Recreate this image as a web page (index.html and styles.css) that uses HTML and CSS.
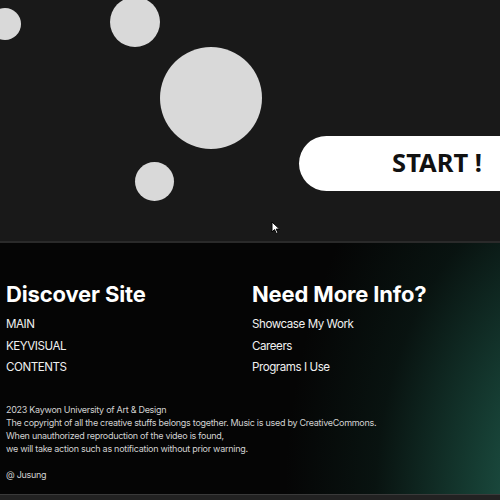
FILE: index.html
```html
<!DOCTYPE html>
<html>
<head>
<meta charset="utf-8">
<link rel="stylesheet" href="styles.css">
</head>
<body>
<section class="hero">
  <span class="dot dot-a"></span>
  <span class="dot dot-b"></span>
  <span class="dot dot-c"></span>
  <span class="dot dot-d"></span>
  <button class="start">START !</button>
  <svg class="cursor" width="10" height="14" viewBox="0 0 10 14"><path d="M1 1 L1 11 L3.5 8.6 L5.4 12.6 L7 11.9 L5.2 8.1 L8.6 8.1 Z" fill="#fff" stroke="#000" stroke-width="1"/></svg>
</section>
<footer class="footer">
  <div class="cols">
    <div class="col">
      <h2>Discover Site</h2>
      <ul>
        <li>MAIN</li>
        <li>KEYVISUAL</li>
        <li>CONTENTS</li>
      </ul>
    </div>
    <div class="col">
      <h2>Need More Info?</h2>
      <ul>
        <li>Showcase My Work</li>
        <li>Careers</li>
        <li>Programs I Use</li>
      </ul>
    </div>
  </div>
  <p class="copy">2023 Kaywon University of Art &amp; Design<br>The copyright of all the creative stuffs belongs together. Music is used by CreativeCommons.<br>When unauthorized reproduction of the video is found,<br>we will take action such as notification without prior warning.</p>
  <p class="sign">@ Jusung</p>
</footer>
<div class="bottombar"></div>
</body>
</html>
```
FILE: styles.css
```css
html, body {
  margin: 0;
  padding: 0;
  background: #191919;
  overflow: hidden;
}
.hero {
  position: relative;
  height: 241px;
  background: #191919;
  display: flex;
  justify-content: flex-end;
  align-items: flex-start;
  padding-top: 136px;
  box-sizing: border-box;
}
.dot {
  position: absolute;
  border-radius: 50%;
  background: #d9d9d9;
}
.dot-a { left: -11px; top: 8px; width: 32px; height: 32px; }
.dot-b { left: 110px; top: -3px; width: 50px; height: 50px; }
.dot-c { left: 160px; top: 47px; width: 102px; height: 102px; }
.dot-d { left: 135px; top: 162px; width: 39px; height: 39px; }
.start {
  width: 201px;
  height: 55px;
  border: none;
  border-radius: 28px 0 0 28px;
  background: #fff;
  color: #111;
  font-family: "Noto Sans", sans-serif;
  font-weight: 700;
  font-size: 25.5px;
  text-align: right;
  padding: 0 18px 1px 0;
  line-height: 1;
}
.cursor {
  position: absolute;
  left: 271px;
  top: 221px;
}
.footer {
  height: 253px;
  box-sizing: border-box;
  border-top: 2px solid #2a2a2a;
  padding: 38px 0 0 6px;
  background:
    radial-gradient(ellipse 300px 460px at 585px 260px, rgba(40,110,93,0.95) 0%, rgba(28,82,68,0.75) 35%, rgba(14,40,33,0.4) 70%, rgba(5,5,5,0) 100%),
    #050505;
  color: #fff;
  font-family: "Inter", sans-serif;
}
.cols {
  display: grid;
  grid-template-columns: 246px 246px;
}
.col h2 {
  margin: 0;
  font-size: 22px;
  font-weight: 700;
  line-height: 26px;
  letter-spacing: -0.15px;
}
.col ul {
  list-style: none;
  margin: 7px 0 0;
  padding: 0;
}
.col li {
  font-size: 11.6px;
  font-weight: 400;
  line-height: 21.6px;
  letter-spacing: -0.45px;
  color: #f0f0f0;
}
.copy {
  margin: 24px 0 0;
  font-size: 9px;
  line-height: 13px;
  letter-spacing: -0.28px;
  color: #d2d2d2;
}
.sign {
  margin: 13px 0 0;
  font-size: 9px;
  line-height: 13px;
  letter-spacing: -0.28px;
  color: #d2d2d2;
}
.bottombar {
  height: 6px;
  border-top: 1px solid #3a3a3a;
  background: #222;
}
```
